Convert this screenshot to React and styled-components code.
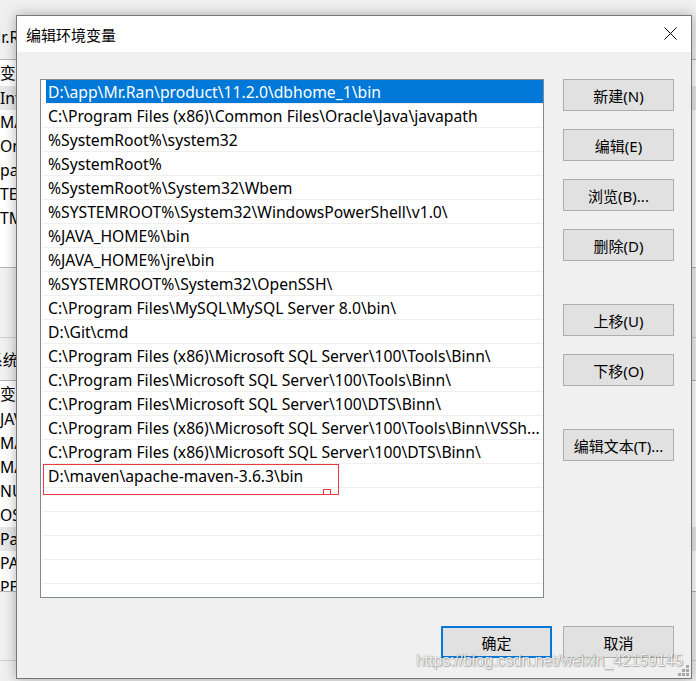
import React from 'react';
import styled, { createGlobalStyle } from 'styled-components';

const GlobalStyle = createGlobalStyle`
	html, body {
		margin: 0;
		padding: 0;
	}
	body {
		background: #f0f0f0;
		color: #000;
		font-family: "Noto Sans", "Noto Sans CJK SC", sans-serif;
		font-size: 15px;
		overflow: hidden;
	}
`;

const Desktop = styled.div`
	position: relative;
	width: 696px;
	height: 681px;
	overflow: hidden;
	background: #f0f0f0;
`;

/* the parent window behind the dialog, only its left edge shows */
const BackWindow = styled.div`
	position: absolute;
	left: -14px;
	top: 0;
	width: 760px;
	height: 681px;
	box-sizing: border-box;
	padding-top: 26px;
	display: flex;
	flex-direction: column;
	background: #f0f0f0;
	font-size: 15.7px;
`;
const BackLabel = styled.div`
	width: 30px;
	height: 22px;
	line-height: 22px;
	padding-left: 1px;
	margin-top: ${p => p.$top || 0}px;
	margin-bottom: ${p => p.$gap}px;
	white-space: nowrap;
	overflow: hidden;
`;
const BackList = styled.div`
	height: ${p => p.$h}px;
	box-sizing: border-box;
	background: #fff;
	border-top: 1px solid #b4b4b4;
	border-bottom: 1px solid #b4b4b4;
	overflow: hidden;
	flex: none;
`;
const BackHeader = styled.div`
	width: 16px;
	height: 26px;
	line-height: 26px;
	padding-left: 14px;
	white-space: nowrap;
	overflow: hidden;
`;
const BackRow = styled.div`
	height: 24px;
	line-height: 24px;
	background: ${p => (p.$sel ? '#e8e8e8' : 'transparent')};
`;
const BackCell = styled.div`
	width: 16px;
	padding-left: 14px;
	white-space: nowrap;
	overflow: hidden;
`;
const BackDivider = styled.div`
	height: 1px;
	background: #cfcfcf;
	margin-top: ${p => p.$top}px;
	flex: none;
`;

const Dialog = styled.div`
	position: absolute;
	left: 16px;
	top: 15px;
	width: 676px;
	height: 664px;
	box-sizing: border-box;
	border: 1px solid #777;
	background: #f0f0f0;
	box-shadow: 0 0 12px rgba(0, 0, 0, 0.3);
	display: flex;
	flex-direction: column;
`;
const TitleBar = styled.div`
	flex: none;
	height: 36px;
	background: #fff;
	display: flex;
	align-items: center;
	justify-content: space-between;
	padding: 0 14px 0 9px;
`;
const Title = styled.span`
	font-family: "Noto Sans CJK SC", sans-serif;
	font-size: 15px;
`;
const CloseIcon = styled.svg`
	width: 13px;
	height: 13px;
	margin-top: -1px;
`;
const Body = styled.div`
	flex: 1;
	display: grid;
	grid-template-columns: 504px 111px;
	grid-template-rows: 519px auto;
	column-gap: 19px;
	row-gap: 28px;
	align-content: start;
	padding: 27px 17px 0 23px;
`;
const ListBox = styled.div`
	position: relative;
	box-sizing: border-box;
	border: 1px solid #828790;
	background: #fff;
	padding-left: 1px;
	overflow: hidden;
`;
const Row = styled.div`
	display: flex;
	height: 23px;
	border-bottom: 1px solid #efefef;
`;
const Cell = styled.div`
	flex: 1;
	margin-left: 4px;
	padding-left: 2px;
	line-height: 24px;
	font-size: 15.7px;
	white-space: nowrap;
	overflow: hidden;
	background: ${p => (p.$sel ? '#0078d7' : 'transparent')};
	color: ${p => (p.$sel ? '#fff' : '#000')};
`;
const Annotation = styled.div`
	position: absolute;
	left: 2px;
	top: 384px;
	width: 296px;
	height: 31px;
	box-sizing: border-box;
	border: 1px solid #ea3b3f;
`;
const Handle = styled.div`
	position: absolute;
	left: 279px;
	top: 24px;
	width: 8px;
	height: 6px;
	box-sizing: border-box;
	border: 1px solid #ea3b3f;
	background: #fff;
`;
const SideColumn = styled.div`
	display: flex;
	flex-direction: column;
	gap: 43px;
`;
const ButtonGroup = styled.div`
	display: flex;
	flex-direction: column;
	gap: 18px;
`;
const Button = styled.button`
	width: 111px;
	height: 32px;
	box-sizing: border-box;
	padding: 0;
	background: #e1e1e1;
	border: ${p => (p.$default ? '2px solid #0078d7' : '1px solid #adadad')};
	border-radius: 0;
	font-family: "Noto Sans", "Noto Sans CJK SC", sans-serif;
	font-size: 15px;
	color: #000;
`;
const Footer = styled.div`
	grid-column: 1 / -1;
	display: flex;
	justify-content: flex-end;
	gap: 11px;
`;
const Grip = styled.svg`
	position: absolute;
	right: 1px;
	bottom: 1px;
	width: 12px;
	height: 12px;
`;
const Watermark = styled.div`
	position: absolute;
	left: 416px;
	top: 652px;
	font-family: "Liberation Sans", Arial, sans-serif;
	font-size: 15.7px;
	color: rgba(255, 255, 255, 0.92);
	text-shadow: 0 0 1px rgba(0, 0, 0, 0.5), 1px 1px 1px rgba(0, 0, 0, 0.25);
	white-space: nowrap;
`;

const userVars = ['Intel', 'MAVEN_HOME', 'OneDrive', 'path', 'TEMP', 'TMP'];
const systemVars = ['JAVA_HOME', 'MAVEN_HOME', 'MAVEN_OPTS', 'NUMBER_OF_PROCESSORS', 'OS', 'Path', 'PATHEXT', 'PERCENT'];

const paths = [
	'D:\\app\\Mr.Ran\\product\\11.2.0\\dbhome_1\\bin',
	'C:\\Program Files (x86)\\Common Files\\Oracle\\Java\\javapath',
	'%SystemRoot%\\system32',
	'%SystemRoot%',
	'%SystemRoot%\\System32\\Wbem',
	'%SYSTEMROOT%\\System32\\WindowsPowerShell\\v1.0\\',
	'%JAVA_HOME%\\bin',
	'%JAVA_HOME%\\jre\\bin',
	'%SYSTEMROOT%\\System32\\OpenSSH\\',
	'C:\\Program Files\\MySQL\\MySQL Server 8.0\\bin\\',
	'D:\\Git\\cmd',
	'C:\\Program Files (x86)\\Microsoft SQL Server\\100\\Tools\\Binn\\',
	'C:\\Program Files\\Microsoft SQL Server\\100\\Tools\\Binn\\',
	'C:\\Program Files\\Microsoft SQL Server\\100\\DTS\\Binn\\',
	'C:\\Program Files (x86)\\Microsoft SQL Server\\100\\Tools\\Binn\\VSSh...',
	'C:\\Program Files (x86)\\Microsoft SQL Server\\100\\DTS\\Binn\\',
	'D:\\maven\\apache-maven-3.6.3\\bin',
	'', '', '', '', ''
];

function GripDots() {
	const dots = [
		[8, 0], [8, 4], [4, 4], [8, 8], [4, 8], [0, 8]
	];
	return (
		<Grip viewBox="0 0 12 12">
			{dots.map(([x, y]) => (
				<rect key={`${x}-${y}`} x={x} y={y} width="3" height="3" fill="#a8a8a8" />
			))}
		</Grip>
	);
}

export default function App() {
	return (
		<>
			<GlobalStyle />
			<Desktop>
				<BackWindow>
					<BackLabel $gap={11}>Mr.Ran 的用户变量(U)</BackLabel>
					<BackList $h={209}>
						<BackHeader>变量</BackHeader>
						{userVars.map((name, i) => (
							<BackRow key={name} $sel={i === 0}>
								<BackCell>{name}</BackCell>
							</BackRow>
						))}
					</BackList>
					<BackDivider $top={69} />
					<BackLabel $top={11} $gap={9}>系统变量(S)</BackLabel>
					<BackList $h={212}>
						<BackHeader>变量</BackHeader>
						{systemVars.map(name => (
							<BackRow key={name} $sel={name === 'Path'}>
								<BackCell>{name}</BackCell>
							</BackRow>
						))}
					</BackList>
					<BackDivider $top={68} />
				</BackWindow>

				<Dialog>
					<TitleBar>
						<Title>编辑环境变量</Title>
						<CloseIcon viewBox="0 0 13 13">
							<path d="M0.5 0.5 L12.5 12.5 M12.5 0.5 L0.5 12.5" stroke="#000" strokeWidth="1" fill="none" />
						</CloseIcon>
					</TitleBar>
					<Body>
						<ListBox>
							{paths.map((p, i) => (
								<Row key={i}>
									<Cell $sel={i === 0}>{p}</Cell>
								</Row>
							))}
							<Annotation>
								<Handle />
							</Annotation>
						</ListBox>
						<SideColumn>
							<ButtonGroup>
								<Button>新建(N)</Button>
								<Button>编辑(E)</Button>
								<Button>浏览(B)...</Button>
								<Button>删除(D)</Button>
							</ButtonGroup>
							<ButtonGroup>
								<Button>上移(U)</Button>
								<Button>下移(O)</Button>
							</ButtonGroup>
							<ButtonGroup>
								<Button>编辑文本(T)...</Button>
							</ButtonGroup>
						</SideColumn>
						<Footer>
							<Button $default>确定</Button>
							<Button>取消</Button>
						</Footer>
					</Body>
					<GripDots />
				</Dialog>

				<Watermark>https://blog.csdn.net/weixin_42159145</Watermark>
			</Desktop>
		</>
	);
}
